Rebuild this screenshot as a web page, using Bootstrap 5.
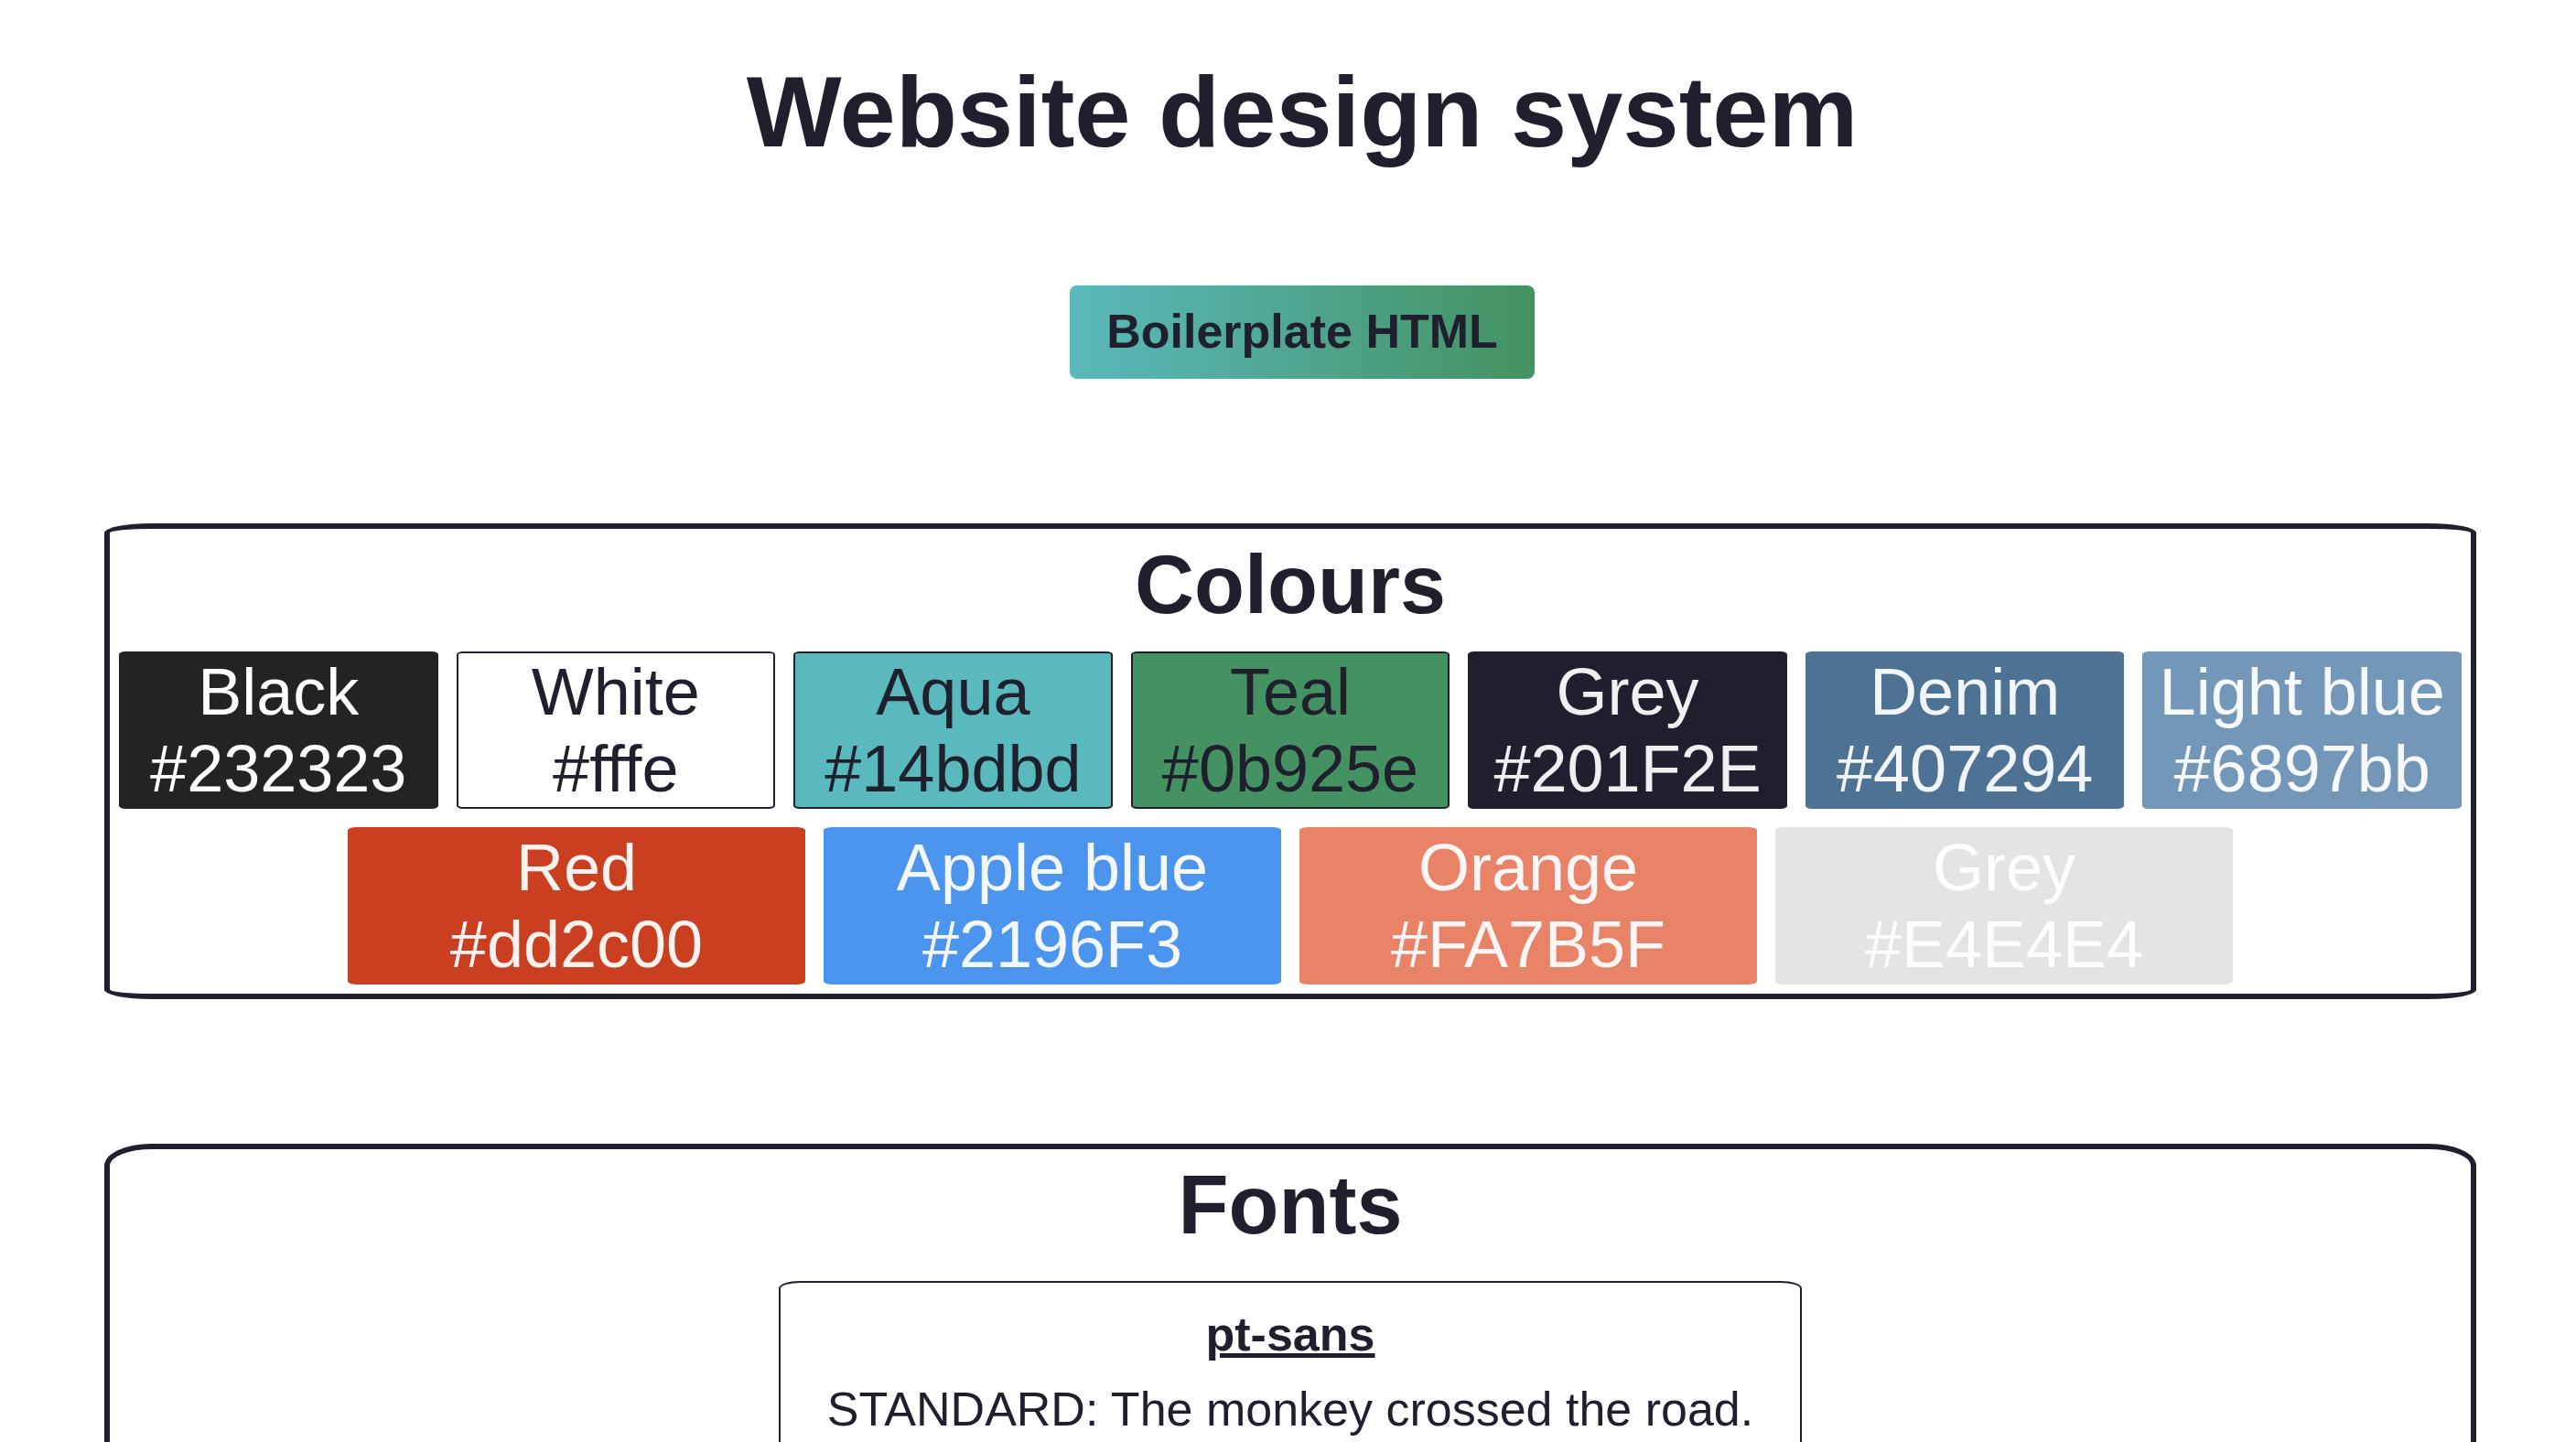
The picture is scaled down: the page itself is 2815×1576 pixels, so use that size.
<!DOCTYPE html>
<html lang="en">
<head>
<meta charset="utf-8">
<meta name="viewport" content="width=device-width, initial-scale=1">
<title>Website design system</title>
<link href="https://cdn.jsdelivr.net/npm/bootstrap@5.3.0/dist/css/bootstrap.min.css" rel="stylesheet">
<style>
  :root { --ink: #201f2d; }
  body {
    background: #fefefe;
    color: var(--ink);
    font-family: "Liberation Sans", Arial, sans-serif;
    font-size: 52px;
    line-height: 60px;
  }
  .page-header { padding: 59px 0 0 31px; }
  .page-title { font-size: 110px; line-height: 126px; margin-bottom: 127px; }
  .btn-boilerplate {
    --bs-btn-color: var(--ink);
    --bs-btn-hover-color: var(--ink);
    --bs-btn-active-color: var(--ink);
    padding: 20px 40px 22px;
    border: 0;
    border-radius: 8px;
    background: linear-gradient(to right, #5ab9bc, #449261);
    box-shadow: 0 0 0 2px #f4f9f9;
    font-size: 52px;
    line-height: 60px;
  }
  .page-main { padding: 0 109px 0 114px; }
  .panel {
    margin-top: 158px;
    padding: 10px 0 0;
    border: 6px solid var(--ink);
    border-radius: 2%;
  }
  .panel-fonts { border-radius: 52px / 24px; padding-bottom: 32px; }
  .panel-title { font-size: 90px; line-height: 102px; }
  .swatches { gap: 20px; padding: 22px 10px 10px; }
  .swatch {
    flex: 1 1 330px;
    max-width: 500px;
    border: 2px solid var(--swatch-edge, var(--swatch));
    border-radius: 2%;
    background: var(--swatch);
    color: var(--swatch-text, var(--ink));
    font-size: 72px;
    line-height: 84px;
  }
  .sw-black { --swatch: #232323; --swatch-text: #fefefe; }
  .sw-white { --swatch: #fefefe; --swatch-edge: var(--ink); }
  .sw-aqua { --swatch: #5ab9bc; --swatch-edge: var(--ink); }
  .sw-teal { --swatch: #449261; --swatch-edge: var(--ink); }
  .sw-dark { --swatch: #201f2d; --swatch-text: #f0f0f0; }
  .sw-denim { --swatch: #4e7293; --swatch-text: #f2f6fa; }
  .sw-light { --swatch: #7397b9; --swatch-text: #f7f9fc; }
  .sw-red { --swatch: #c93f20; --swatch-text: #fdf2ef; }
  .sw-blue { --swatch: #4b95ee; --swatch-text: #f4f8fe; }
  .sw-orange { --swatch: #e98368; --swatch-text: #fef5f4; }
  .sw-grey { --swatch: #e4e4e4; --swatch-text: #fdfdfe; }
  .font-sample {
    margin-top: 32px;
    padding: 26px 51px 180px;
    border: 2px solid var(--ink);
    border-radius: 24px / 8px;
  }
  .font-name { font-size: 52px; line-height: 60px; margin-bottom: 22px; }
</style>
</head>
<body>
<header class="page-header text-center">
  <h1 class="page-title fw-bold">Website design system</h1>
  <button type="button" class="btn btn-boilerplate fw-bold d-block mx-auto">Boilerplate HTML</button>
</header>

<main class="page-main text-center">
  <section class="panel">
    <h2 class="panel-title fw-bold m-0">Colours</h2>
    <div class="swatches d-flex flex-wrap justify-content-center">
      <div class="swatch sw-black">Black<br>#232323</div>
      <div class="swatch sw-white">White<br>#fffe</div>
      <div class="swatch sw-aqua">Aqua<br>#14bdbd</div>
      <div class="swatch sw-teal">Teal<br>#0b925e</div>
      <div class="swatch sw-dark">Grey<br>#201F2E</div>
      <div class="swatch sw-denim">Denim<br>#407294</div>
      <div class="swatch sw-light">Light blue<br>#6897bb</div>
      <div class="swatch sw-red">Red<br>#dd2c00</div>
      <div class="swatch sw-blue">Apple blue<br>#2196F3</div>
      <div class="swatch sw-orange">Orange<br>#FA7B5F</div>
      <div class="swatch sw-grey">Grey<br>#E4E4E4</div>
    </div>
  </section>

  <section class="panel panel-fonts d-flex flex-column align-items-center">
    <h2 class="panel-title fw-bold m-0">Fonts</h2>
    <div class="font-sample">
      <h3 class="font-name fw-bold text-decoration-underline">pt-sans</h3>
      <p class="m-0">STANDARD: The monkey crossed the road.</p>
    </div>
  </section>
</main>
<script src="https://cdn.jsdelivr.net/npm/bootstrap@5.3.0/dist/js/bootstrap.bundle.min.js"></script>
</body>
</html>
